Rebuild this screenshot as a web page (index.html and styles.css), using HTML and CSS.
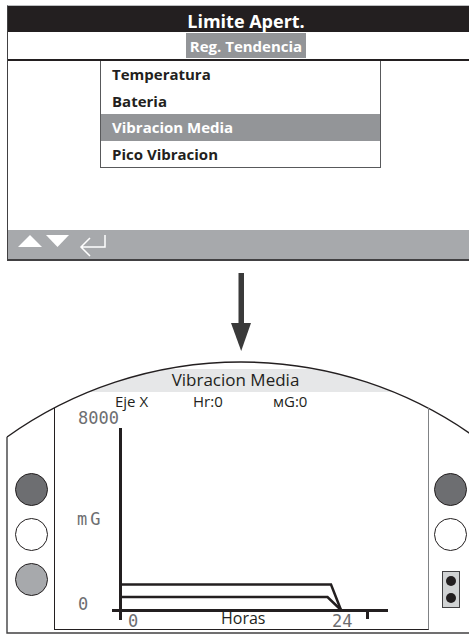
FILE: index.html
```html
<!DOCTYPE html>
<html lang="es">
<head>
    <meta charset="UTF-8">
    <meta name="viewport" content="width=device-width, initial-scale=1.0">
    <title>Reg. Tendencia - Vibracion Media</title>
    <link rel="stylesheet" href="styles.css">
</head>
<body>
    <!-- Menu screen -->
    <div class="panel">
        <div class="panel-title">Limite Apert.</div>
        <div class="panel-sub"><span>Reg. Tendencia</span></div>
        <div class="panel-body">
            <ul class="menu">
                <li>Temperatura</li>
                <li>Bateria</li>
                <li class="selected">Vibracion Media</li>
                <li>Pico Vibracion</li>
            </ul>
        </div>
        <div class="panel-keys">
            <svg width="110" height="29" viewBox="0 0 110 29">
                <polygon points="10,17 34,17 22,5" fill="#fff"/>
                <polygon points="38,5 61,5 49.5,17" fill="#fff"/>
                <path d="M97 5 V17 H73 M82 8 L73 17 L82 26" fill="none" stroke="#fff" stroke-width="1.5"/>
            </svg>
        </div>
    </div>

    <div class="arrow">
        <svg width="22" height="80" viewBox="0 0 22 80">
            <rect x="8.5" y="2" width="5.5" height="51" fill="#3a3a3a"/>
            <polygon points="1,52 21,52 11.2,80" fill="#3a3a3a"/>
        </svg>
    </div>

    <!-- Actuator display -->
    <div class="display">
        <svg class="frame" width="469" height="279" viewBox="0 0 469 279">
            <path d="M88.5 37 A402.5 402.5 0 0 1 166.3 14 H315.7 A402.5 402.5 0 0 1 393.5 37 Z" fill="#e6e7e8"/>
            <path d="M7 82 A402.5 402.5 0 0 1 475 82" fill="none" stroke="#231f20" stroke-width="1.4"/>
            <path d="M7 82 V278 H470" fill="none" stroke="#414042" stroke-width="1.4"/>
        </svg>

        <div class="screen-title">Vibracion Media</div>
        <div class="readouts">
            <span>Eje X</span>
            <span>Hr:0</span>
            <span>мG:0</span>
        </div>

        <div class="device">
            <div class="side side-left">
                <span class="led led-dark"></span>
                <span class="led"></span>
                <span class="led led-light"></span>
            </div>

            <div class="screen">
                <svg class="chart" width="373" height="221" viewBox="0 0 373 221">
                    <line x1="65.5" y1="20" x2="65.5" y2="212" stroke="#231f20" stroke-width="3"/>
                    <line x1="57" y1="202.5" x2="333" y2="202.5" stroke="#231f20" stroke-width="3"/>
                    <line x1="312.5" y1="203" x2="312.5" y2="211" stroke="#231f20" stroke-width="3"/>
                    <polyline points="67,176.5 276,176.5 286,202" fill="none" stroke="#231f20" stroke-width="2.5"/>
                    <polyline points="67,189 272.5,189 286,202" fill="none" stroke="#231f20" stroke-width="2.5"/>
                </svg>
                <span class="lcd lcd-max">8000</span>
                <span class="lcd lcd-unit">mG</span>
                <span class="lcd lcd-min">0</span>
                <span class="lcd lcd-start">0</span>
                <span class="lcd lcd-end">24</span>
                <span class="axis-label">Horas</span>
            </div>

            <div class="side side-right">
                <span class="led led-dark"></span>
                <span class="led"></span>
                <span class="plug"><i></i><i></i></span>
            </div>
        </div>
    </div>
</body>
</html>
```

FILE: styles.css
```css
/* Global */
html, body {
    overflow: hidden;
}

body {
    margin: 0;
    width: 469px;
    height: 634px;
    font-family: "Open Sans", "Liberation Sans", sans-serif;
    color: #231f20;
    background-color: #fff;
}

/* Menu screen */
.panel {
    width: 476px;
    margin: 5px 0 0 7px;
    border-top: 1px solid #bcbec0;
    border-left: 1px solid #414042;
}

.panel-title {
    height: 26px;
    line-height: 30px;
    background-color: #231f20;
    color: #fff;
    font-weight: 700;
    font-size: 18px;
    text-align: center;
}

.panel-sub {
    height: 26px;
    padding-top: 1px;
    text-align: center;
    border-bottom: 2px solid #231f20;
}

.panel-sub span {
    display: inline-block;
    height: 23px;
    padding: 2px 4px 0;
    line-height: 23px;
    background-color: #939598;
    color: #fff;
    font-weight: 700;
    font-size: 15px;
}

.panel-body {
    height: 169px;
}

.menu {
    list-style: none;
    margin: 0 0 0 92px;
    padding: 0;
    width: 279px;
    border: 1px solid #58595b;
    border-top: none;
}

.menu li {
    height: 26.5px;
    line-height: 26.5px;
    padding-left: 11px;
    font-weight: 700;
    font-size: 15px;
}

.menu li.selected {
    background-color: #939598;
    color: #fff;
}

.panel-keys {
    height: 29px;
    background-color: #a7a9ac;
    border-bottom: 2px solid #414042;
}

.panel-keys svg {
    display: block;
}

/* Arrow between screens */
.arrow {
    margin: 10px 0 0 230px;
    height: 80px;
}

.arrow svg {
    display: block;
}

/* Actuator display */
.display {
    position: relative;
    height: 279px;
    margin-top: 4px;
    padding-top: 14px;
    box-sizing: border-box;
}

.frame {
    position: absolute;
    top: 0;
    left: 0;
    overflow: visible;
}

.screen-title {
    position: relative;
    height: 23px;
    line-height: 22px;
    font-size: 17px;
    text-align: center;
    padding-left: 2px;
}

.readouts {
    position: relative;
    display: grid;
    grid-template-columns: 78px 80px auto;
    height: 16px;
    box-sizing: border-box;
    padding: 2.5px 0 0 115px;
    font-size: 15px;
    line-height: 13px;
}

.device {
    position: relative;
    display: flex;
    height: 226px;
}

.side {
    display: flex;
    flex-direction: column;
    align-items: flex-start;
    gap: 12px;
    padding-top: 65px;
}

.side-left {
    width: 39px;
    padding-left: 15px;
}

.side-right {
    padding-left: 5px;
}

.led {
    width: 31px;
    height: 31px;
    border: 1px solid #231f20;
    border-radius: 50%;
    background-color: #fff;
}

.led-dark {
    background-color: #6d6e71;
}

.led-light {
    background-color: #a7a9ac;
}

.plug {
    display: flex;
    flex-direction: column;
    justify-content: space-around;
    align-items: center;
    width: 16px;
    height: 35px;
    margin: 8px 0 0 8px;
    background-color: #d1d3d4;
    border: 1px solid #414042;
}

.plug i {
    width: 10px;
    height: 10px;
    border-radius: 50%;
    background-color: #231f20;
}

.screen {
    position: relative;
    width: 373px;
    height: 221px;
    border-left: 1px solid #231f20;
    border-right: 1px solid #808285;
    border-bottom: 1px solid #231f20;
}

.chart {
    position: absolute;
    top: 0;
    left: 0;
}

.lcd {
    position: absolute;
    font-family: "DejaVu Sans Mono", "Liberation Mono", monospace;
    font-size: 17px;
    line-height: 1;
    color: #6d6e71;
}

.lcd-max {
    left: 23px;
    top: 2px;
}

.lcd-unit {
    left: 22px;
    top: 103px;
    letter-spacing: 3px;
}

.lcd-min {
    left: 23px;
    top: 188px;
}

.lcd-start {
    left: 73px;
    top: 205px;
}

.lcd-end {
    left: 277px;
    top: 205px;
}

.axis-label {
    position: absolute;
    left: 166px;
    top: 202px;
    font-size: 16px;
    line-height: 1;
}
```
